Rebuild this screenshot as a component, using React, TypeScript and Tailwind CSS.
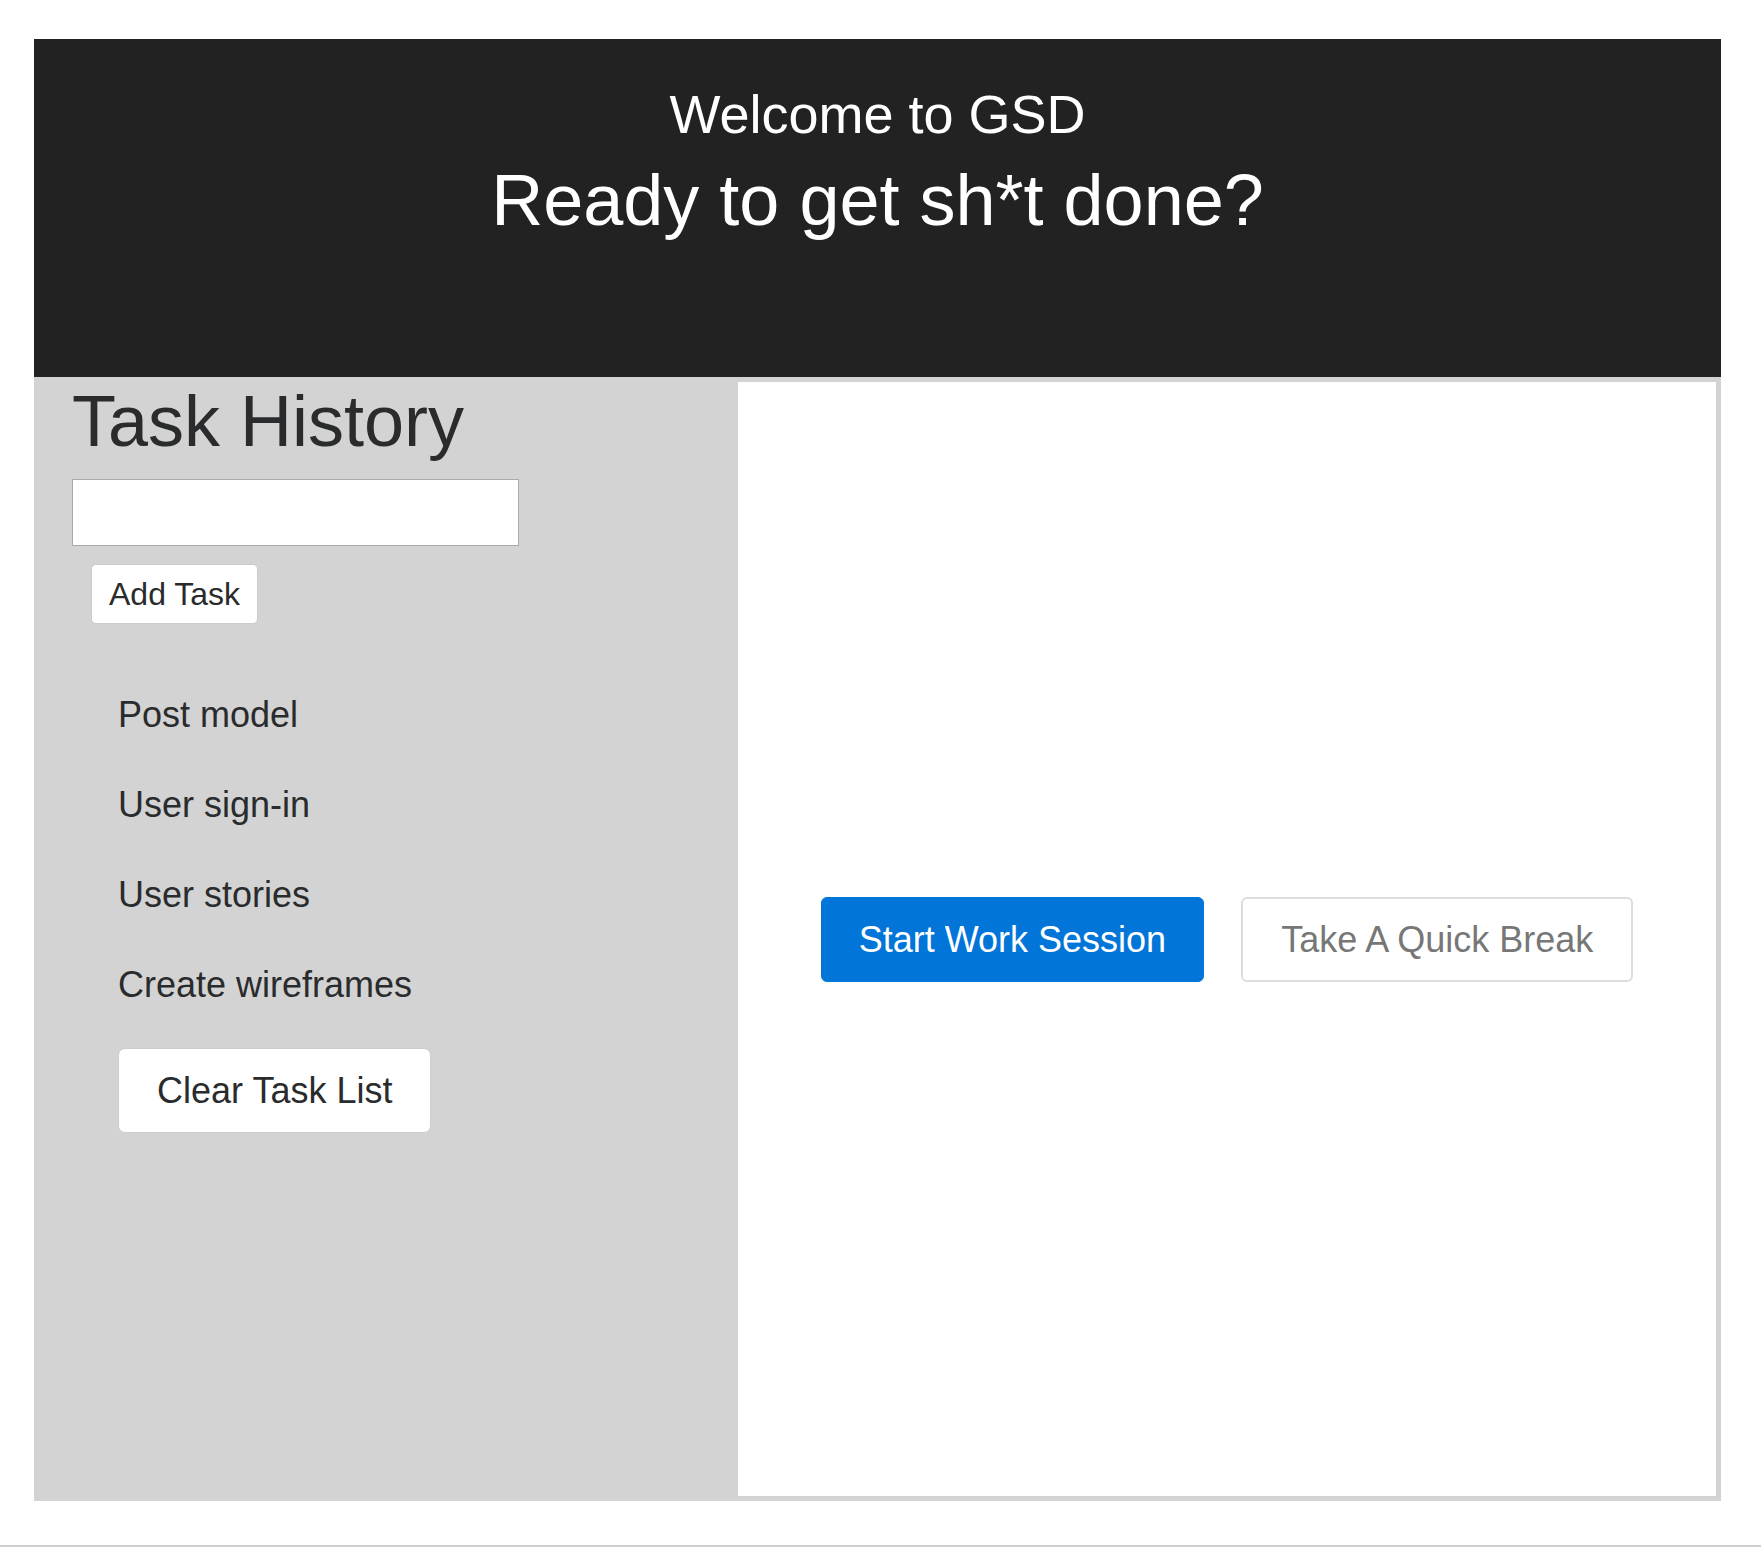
import { useState } from 'react';

const initialTasks = ['Post model', 'User sign-in', 'User stories', 'Create wireframes'];

function TaskHistory() {
  const [tasks, setTasks] = useState<string[]>(initialTasks);
  const [draft, setDraft] = useState('');

  const addTask = () => {
    if (!draft.trim()) return;
    setTasks([...tasks, draft.trim()]);
    setDraft('');
  };

  return (
    <aside className="w-[704px] shrink-0 pl-[38px] pt-[3px]">
      <h2 className="text-[72px] leading-[1.15] text-[#292b2c]">Task History</h2>
      <input
        type="text"
        value={draft}
        onChange={(e) => setDraft(e.target.value)}
        className="mt-[16px] block w-[447px] h-[67px] bg-white border border-[#aaa] px-3 text-[28px] outline-none"
      />
      <button
        onClick={addTask}
        className="mt-[18px] ml-[19px] block bg-white border border-[#ccc] rounded-[5px] px-[17px] py-[10px] text-[32px] leading-[38px] text-[#292b2c]"
      >
        Add Task
      </button>

      {/* lista de tarefas */}
      <ul className="mt-[46px] pl-[46px]">
        {tasks.map((t) => (
          <li key={t} className="text-[36px] leading-[90px] text-[#292b2c]">{t}</li>
        ))}
      </ul>
      <button
        onClick={() => setTasks([])}
        className="mt-[18px] ml-[46px] block bg-white border border-[#ccc] rounded-[7px] px-[38px] py-[19px] text-[36px] leading-[45px] text-[#292b2c]"
      >
        Clear Task List
      </button>
    </aside>
  );
}

function SessionPanel() {
  return (
    <section className="flex-1 bg-white mt-[5px] mr-[5px] mb-[5px] flex items-center justify-center gap-[37px]">
      <button className="bg-[#0275d8] border border-[#0275d8] rounded-[6px] px-[37px] py-[19px] text-[36px] leading-[45px] text-white">
        Start Work Session
      </button>
      <button className="bg-white border-2 border-[#ddd] rounded-[6px] px-[38px] py-[18px] text-[36px] leading-[45px] text-[#777]">
        Take A Quick Break
      </button>
    </section>
  );
}

export default function App() {
  return (
    <div className="min-h-[1548px] bg-white font-['Liberation_Sans',Arial,sans-serif] pt-[39px]">
      <div className="ml-[34px] w-[1687px]">
        <header className="bg-[#222] h-[338px] pt-[44px] text-center text-white">
          <h1 className="text-[54px] leading-[1.15]">Welcome to GSD</h1>
          <h2 className="mt-[14px] text-[72px] leading-[1.15]">Ready to get sh*t done?</h2>
        </header>
        <main className="flex bg-[#d3d3d3] h-[1124px]">
          <TaskHistory />
          <SessionPanel />
        </main>
      </div>
      <div className="mt-[44px] h-[2px] bg-[#cfcfcf]" />
    </div>
  );
}
